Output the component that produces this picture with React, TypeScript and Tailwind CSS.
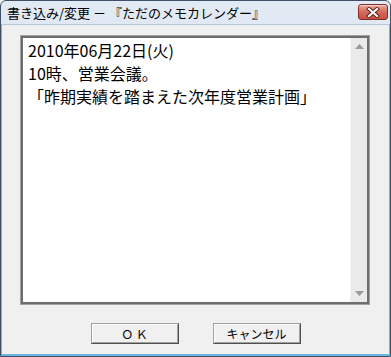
import React from "react";

const jp = { fontFamily: '"Noto Sans CJK JP", "Noto Sans", sans-serif' };

function CloseButton() {
  return (
    <div className="w-[30px] h-[16px] rounded-[3px] border border-[#7a2f27] bg-gradient-to-b from-[#e9a99c] via-[#d4685b] to-[#c9503f] flex items-center justify-center shadow-[inset_0_1px_0_rgba(255,255,255,0.5)]">
      <svg width="14" height="11" viewBox="0 0 14 11">
        <path d="M3 2 L11 9 M11 2 L3 9" stroke="#5b1d15" strokeWidth="4" strokeLinecap="square" />
        <path d="M3 2 L11 9 M11 2 L3 9" stroke="#ffffff" strokeWidth="2.2" strokeLinecap="square" />
      </svg>
    </div>
  );
}

function WinButton({ label }: { label: string }) {
  return (
    <div className="w-[88px] h-[21px] border border-t-[#a0a0a0] border-l-[#a0a0a0] border-r-[#505050] border-b-[#505050] bg-[#f0f0f0]">
      <div className="w-full h-full border border-t-white border-l-white border-r-[#a0a0a0] border-b-[#a0a0a0] flex items-center justify-center text-[12px] text-black leading-none" style={jp}>
        {label}
      </div>
    </div>
  );
}

export default function App() {
  return (
    <div className="w-[391px] h-[357px] flex flex-col border border-[#3e5166] rounded-t-[6px] overflow-hidden bg-gradient-to-b from-[#e2eaf4] to-[#c6d7ea]">
      <div className="h-[23px] flex items-start justify-between pl-[6px] pr-[2px] pt-[3px] shrink-0">
        <div className="text-[13px] leading-[17px] text-black whitespace-pre" style={jp}>
          書き込み/変更 － 『ただのメモカレンダー』
        </div>
        <CloseButton />
      </div>
      <div className="flex-1 flex flex-col border-l border-r border-b-2 border-[#6bb5e2] bg-[#f0f0f0] border-t border-t-[#b4c6da]">
        <div className="pl-[18px] pt-[10px]">
          <div className="w-[350px] h-[270px] border border-[#a0a0a0]">
            <div className="w-full h-full border-2 border-[#6d6d6d] bg-white flex">
              <div className="flex-1 pl-[5px] pt-[1px] text-[16px] leading-[23px] text-black" style={jp}>
                <div>2010年06月22日(火)</div>
                <div>10時、営業会議。</div>
                <div>「昨期実績を踏まえた次年度営業計画」</div>
              </div>
              <div className="w-[17px] h-full bg-[#eaeaea] border-l border-[#f4f4f4] flex flex-col justify-between items-center py-[6px]">
                <svg width="9" height="5" viewBox="0 0 9 5">
                  <path d="M4.5 0 L9 5 L0 5 Z" fill="#9a9a9a" />
                </svg>
                <svg width="9" height="5" viewBox="0 0 9 5">
                  <path d="M0 0 L9 0 L4.5 5 Z" fill="#9a9a9a" />
                </svg>
              </div>
            </div>
          </div>
        </div>
        <div className="flex justify-center gap-[34px] pt-[18px]">
          <WinButton label="Ｏ Ｋ" />
          <WinButton label="キャンセル" />
        </div>
      </div>
    </div>
  );
}
